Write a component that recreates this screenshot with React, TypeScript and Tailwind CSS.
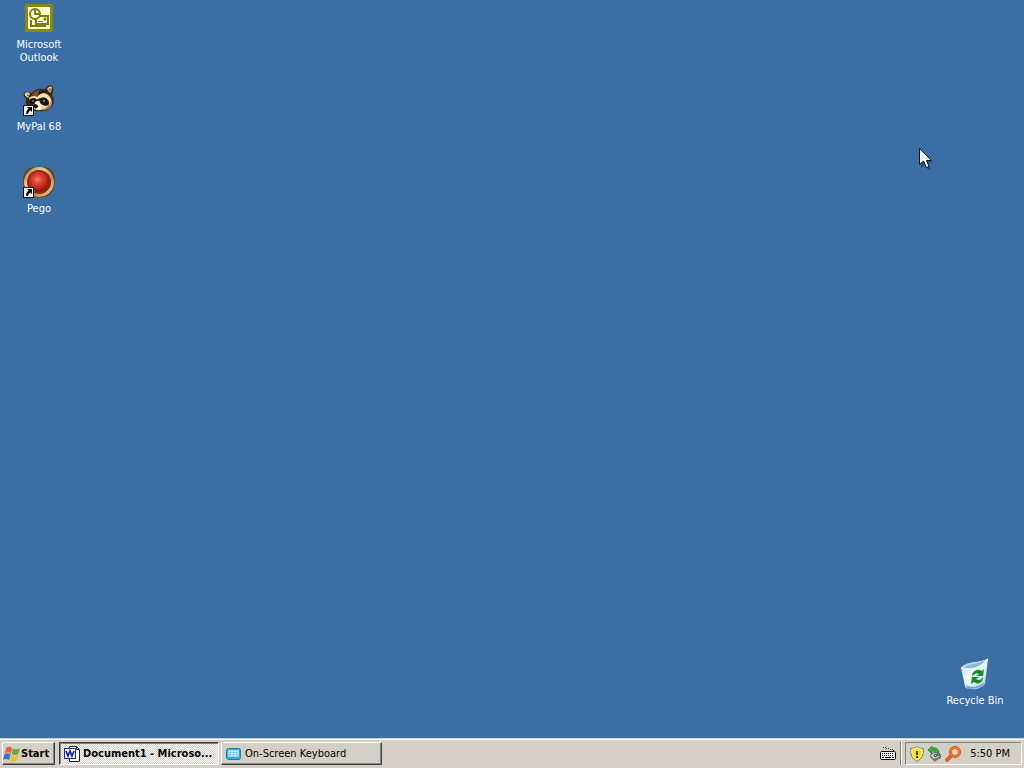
import React from "react";

function ShortcutArrow() {
  return (
    <g>
      <rect x="0.5" y="21.5" width="10" height="10" fill="#fff" stroke="#111" />
      <path d="M4 23h5v5l-1.6-1.6C6 27.3 5.3 28.5 5 30H3.2C3 27.8 3.8 26 5.6 24.6z" fill="#000" />
    </g>
  );
}

function OutlookIcon() {
  return (
    <svg width="32" height="32" viewBox="0 0 32 32" aria-hidden="true">
      <rect x="2" y="2" width="28" height="28" fill="#8b8a08" />
      <rect x="5" y="5" width="22" height="22" fill="#fffde0" />
      <rect x="7" y="7" width="18" height="18" fill="#fdfbc9" />
      <rect x="13" y="14" width="12" height="8" fill="#fffde6" stroke="#7d7c0c" strokeWidth="2" />
      <path d="M8 18v6h15" fill="none" stroke="#7d7c0c" strokeWidth="2" />
      <path d="M21 16h2v2h-2zM15 19.5h5" fill="#7d7c0c" stroke="#7d7c0c" />
      <circle cx="12" cy="12" r="5" fill="#fffde6" stroke="#7d7c0c" strokeWidth="2" />
      <path d="M12 8v4h4" fill="none" stroke="#7d7c0c" strokeWidth="2" />
    </svg>
  );
}

function RaccoonIcon() {
  return (
    <svg width="32" height="32" viewBox="0 0 32 32" aria-hidden="true">
      <path d="M1 9c2-2 5-1 7 0 4-4 9-5 14-4l3-3c2-1 4-1 5 1 1 3 0 6-1 8 3 4 2 9-1 12-3 4-8 5-12 4-4 1-8-1-9-4-4-2-5-5-4-8-2-2-3-4-2-6z" fill="#3a2817" />
      <path d="M2 9c2-1 4-1 5 1L5 14c-2-1-4-3-3-5z" fill="#e6cda4" />
      <path d="M4 10l2 1-1 2z" fill="#684326" />
      <path d="M24 5c1-2 3-3 5-2 0 3-1 5-2 6z" fill="#e1c192" />
      <path d="M26 5l2-1-1 4z" fill="#6b4728" />
      <path d="M9 10c4-4 9-5 13-4-4 1-6 4-8 7l-3 1z" fill="#735033" />
      <path d="M16 7c3-1 6-1 8 1-4-1-6 1-9 4z" fill="#1f1710" />
      <path d="M6 14c2-2 5-3 8-1 3-4 8-5 11-2 4 3 5 9 2 12-2-3-3-9-6-9-3-1-6 1-8 2-3 0-4 0-6 1z" fill="#f5dfb5" />
      <path d="M11 18c5-2 11-1 16 0-1 5-5 8-9 8-4 1-7-1-8-4z" fill="#efd09c" />
      <path d="M7 15c3-2 6-1 7 1 0 3-3 5-5 4-2 0-3-3-2-5zM17 15c3-3 8-1 9 3 1 3-3 5-6 3-3-1-4-4-3-6z" fill="#171310" />
      <circle cx="10" cy="17" r="0.8" fill="#e4d3b5" />
      <circle cx="21" cy="17" r="0.8" fill="#fff" />
      <path d="M12 18c3-2 5 1 7 5-1 3-5 4-8 2z" fill="#fff4d2" />
      <path d="M10 21c2-2 4-1 5 1 0 2-2 3-4 2-1 0-2-2-1-3z" fill="#181310" />
      <path d="M18 26c5 0 9-4 10-9 2 5-2 10-10 9z" fill="#b98245" />
      <ShortcutArrow />
    </svg>
  );
}

function PegoIcon() {
  return (
    <svg width="32" height="32" viewBox="0 0 32 32" aria-hidden="true">
      <defs>
        <radialGradient id="pegoRed" cx="46%" cy="40%" r="62%">
          <stop offset="0" stopColor="#ff8168" />
          <stop offset="0.3" stopColor="#df4936" />
          <stop offset="0.75" stopColor="#bd2118" />
          <stop offset="1" stopColor="#721108" />
        </radialGradient>
        <linearGradient id="pegoRing" x2="1" y2="1">
          <stop offset="0" stopColor="#9b6a3c" />
          <stop offset="0.3" stopColor="#ebcd93" />
          <stop offset="0.65" stopColor="#c18d54" />
          <stop offset="1" stopColor="#f0d09a" />
        </linearGradient>
      </defs>
      <path d="M5 3c2-3 20-3 22 0l3 3c3 4 2 17-1 20l-4 4c-4 2-15 2-19 0-6-4-8-18-4-24z" fill="#684020" />
      <circle cx="16" cy="16" r="13.5" fill="#8a2813" stroke="url(#pegoRing)" strokeWidth="3" />
      <circle cx="15.5" cy="15.5" r="10" fill="url(#pegoRed)" />
      <ShortcutArrow />
    </svg>
  );
}

function RecycleIcon() {
  return (
    <svg width="32" height="32" viewBox="0 0 32 32" aria-hidden="true">
      <defs>
        <linearGradient id="binGlass" x2="1" y2="1">
          <stop offset="0" stopColor="#9ccde8" />
          <stop offset="0.4" stopColor="#f1fbff" />
          <stop offset="0.7" stopColor="#d3e9f3" />
          <stop offset="1" stopColor="#86b2cb" />
        </linearGradient>
      </defs>
      <path d="M2 10c4-5 10-5 14-6 5 0 8-2 13-3l-3 25c-3 4-10 6-14 5-3 0-6-1-6-3z" fill="url(#binGlass)" />
      <path d="M2 10c4-5 10-5 14-6 5 0 8-2 13-3-4 7-12 11-18 11-4 0-7 0-9-2z" fill="#b3d9ee" />
      <path d="M5 10c5-4 10-4 14-5l7-2c-4 5-9 7-14 8z" fill="#82b8dc" />
      <path d="M2 10c10 3 20 0 27-9" fill="none" stroke="#f6ffff" strokeWidth="1.5" />
      <path d="M7 27c5 3 12 2 18-2l-1 2c-3 3-9 4-12 4s-5-1-5-4z" fill="#6faacb" />
      <path d="M13 18c0-5 6-8 10-5l2-2-1 7h-7l3-2c-3-1-4 0-7 2z" fill="#178d23" />
      <path d="M24 19c0 6-6 8-9 5l-3 2 1-7h7l-3 2c3 2 5 1 7-2z" fill="#178d23" />
    </svg>
  );
}

function StartFlag() {
  return (
    <svg width="18" height="18" viewBox="0 0 16 16" aria-hidden="true">
      <path d="M3 2.5c2-1.3 3-1.3 5 0L7 7.5c-2-1.3-3.5-1.3-5.5 0z" fill="#e8613a" />
      <path d="M8.6 3c2 1 4 1 6.4 0l-1.3 5c-2 1.2-4 1.2-6.1 0z" fill="#72a93e" />
      <path d="M1.3 8.3c2-1.2 3.5-1.2 5.5 0l-1.3 5c-2-1.1-3.5-1.1-5.5 0z" fill="#3b74d2" />
      <path d="M7.5 8.8c2 1.1 3.8 1.1 6 0l-1.3 5c-2 1.1-3.8 1.1-6 0z" fill="#eebd28" />
    </svg>
  );
}

function WordIcon() {
  return (
    <svg width="16" height="16" viewBox="0 0 16 16" aria-hidden="true">
      <path d="M5.5.5h7l3 3v12h-10z" fill="#fff" stroke="#222" />
      <path d="M12.5.5v3h3" fill="none" stroke="#222" />
      <rect x="0.5" y="2.5" width="11" height="10" fill="#f4f6ff" stroke="#1b2b91" />
      <path d="M2 5l2 5 2-5 2 5 2-5" fill="none" stroke="#15248c" strokeWidth="1.7" />
    </svg>
  );
}

function ScreenKeyboardIcon() {
  return (
    <svg width="16" height="16" viewBox="0 0 16 16" aria-hidden="true">
      <rect x="1.5" y="2.5" width="14" height="11" rx="2" fill="#39abd7" stroke="#2478a7" />
      <rect x="3" y="4" width="11" height="7" fill="#8bd5ee" />
      <path d="M4 5.5h9M4 7.5h9M5 9.5h7" stroke="#e7f9ff" />
      <path d="M5.5 5v5M8.5 5v5M11.5 5v5" stroke="#59bbdf" strokeWidth="0.6" />
    </svg>
  );
}

function KeyboardIcon() {
  return (
    <svg width="16" height="16" viewBox="0 0 16 16" aria-hidden="true">
      <path d="M3 1.5h3M6 2.5h4M10 3.5h3M13.5 4v1" fill="none" stroke="#333" strokeDasharray="1 1" />
      <rect x="0.5" y="5.5" width="15" height="8" rx="1" fill="#eee" stroke="#111" />
      <path d="M2 7.5h12M2 9.5h12" stroke="#111" strokeDasharray="1 1" />
      <path d="M2 11.5h2M5 11.5h6M12 11.5h2" stroke="#111" />
    </svg>
  );
}

function ShieldIcon() {
  return (
    <svg width="16" height="16" viewBox="0 0 16 16" aria-hidden="true">
      <path d="M8 .7c2 1.4 4 1.8 6.2 1.8.5 6-1.2 10.4-6.2 12.8C3 12.9 1.3 8.5 1.8 2.5 4 2.5 6 2.1 8 .7z" fill="#f7df24" stroke="#77796d" />
      <path d="M8 1.8c1.5.9 3.3 1.4 5.1 1.6.2 4.9-1.2 8.6-5.1 10.7-3.9-2.1-5.3-5.8-5.1-10.7C4.7 3.2 6.5 2.7 8 1.8z" fill="none" stroke="#fff6a0" />
      <path d="M8 5v4M8 10v2" stroke="#292915" strokeWidth="1.8" />
    </svg>
  );
}

function DeviceIcon() {
  return (
    <svg width="16" height="16" viewBox="0 0 16 16" aria-hidden="true">
      <path d="M3 9l7-4 4 5-7 4z" fill="#c8cccb" stroke="#666" />
      <path d="M3 9l4 4v2l-4-4zM7 13l7-3v2l-7 4z" fill="#747b79" />
      <path d="M7 9l2-1 1 2-2 1zM10 8l2-1 1 2-2 1z" fill="none" stroke="#474d4b" />
      <path d="M1 4l4-4v2c4-1 6 1 7 4l-3 1C8 5 7 5 5 5v3z" fill="#36ae3c" stroke="#227b2b" strokeWidth="0.7" />
    </svg>
  );
}

function SearchIcon() {
  return (
    <svg width="16" height="16" viewBox="0 0 16 16" aria-hidden="true">
      <path d="M7 9l-5 5" stroke="#a94310" strokeWidth="3.4" strokeLinecap="round" />
      <path d="M7 9l-5 5" stroke="#f16c18" strokeWidth="2.2" strokeLinecap="round" />
      <circle cx="10" cy="6" r="4.5" fill="#e9d5c5" stroke="#b34c10" strokeWidth="3" />
      <circle cx="10" cy="6" r="4.5" fill="none" stroke="#f47a20" strokeWidth="2" />
    </svg>
  );
}

function DesktopItem({ icon, children }: { icon: React.ReactNode; children: React.ReactNode }) {
  return (
    <button type="button" className="flex w-[78px] flex-col items-center gap-1 text-center leading-[13px] text-white">
      {icon}
      <span>{children}</span>
    </button>
  );
}

const raised =
  "border border-t-white border-l-white border-r-[#404040] border-b-[#404040] bg-[#d4d0c8] pt-px shadow-[inset_-1px_-1px_0_#808080]";

export default function App() {
  return (
    <div className="relative flex min-h-screen flex-col overflow-hidden bg-[#3b6ea5] font-['DejaVu_Sans_Condensed','DejaVu_Sans',sans-serif] text-[11px]">
      <main className="flex flex-1 justify-between">
        <div className="grid auto-rows-[82px] content-start items-start pt-[2px]">
          <DesktopItem icon={<OutlookIcon />}>Microsoft<br />Outlook</DesktopItem>
          <DesktopItem icon={<RaccoonIcon />}>MyPal 68</DesktopItem>
          <DesktopItem icon={<PegoIcon />}>Pego</DesktopItem>
        </div>
        <div className="flex items-end pr-[10px] pb-[31px]">
          <DesktopItem icon={<RecycleIcon />}>Recycle Bin</DesktopItem>
        </div>
      </main>

      <footer className="flex h-[30px] shrink-0 items-stretch border-t border-[#d4d0c8] bg-[#d4d0c8] px-[2px] pb-[3px] text-black shadow-[inset_0_1px_0_#fff]">
        <nav aria-label="Taskbar" className="flex flex-1 gap-[2px] pt-[3px]">
          <button type="button" className={`mr-[2px] flex w-[53px] items-center font-bold ${raised}`}>
            <StartFlag />
            <span>Start</span>
          </button>
          <button
            type="button"
            aria-pressed="true"
            className="flex w-40 items-center gap-[3px] border border-t-[#404040] border-r-white border-b-white border-l-[#404040] bg-[conic-gradient(#fff_25%,#d4d0c8_0_50%,#fff_0_75%,#d4d0c8_0)] bg-[length:2px_2px] pt-px pl-1 font-bold whitespace-nowrap shadow-[inset_1px_1px_0_#808080]"
          >
            <WordIcon />
            <span>Document1 - Microso...</span>
          </button>
          <button type="button" className={`flex w-[161px] items-center gap-1 pl-[3px] whitespace-nowrap ${raised}`}>
            <ScreenKeyboardIcon />
            <span>On-Screen Keyboard</span>
          </button>
        </nav>
        <div className="flex items-center gap-[3px] pt-[3px]">
          <button type="button" aria-label="Keyboard input"><KeyboardIcon /></button>
          <div className="ml-px h-full w-[2px] border-r border-l border-r-white border-l-[#808080]" />
          <div className="flex h-full items-center gap-[2px] border border-t-[#808080] border-r-white border-b-white border-l-[#808080] pt-px pr-[11px] pl-[3px]">
            <button type="button" aria-label="Security alert"><ShieldIcon /></button>
            <button type="button" aria-label="Safely remove hardware"><DeviceIcon /></button>
            <button type="button" aria-label="Search"><SearchIcon /></button>
            <time className="ml-[7px] whitespace-nowrap">5:50 PM</time>
          </div>
        </div>
      </footer>

      <svg className="pointer-events-none absolute top-[148px] left-[919px]" width="15" height="22" viewBox="0 0 15 22" aria-hidden="true">
        <path d="M2 4l12 11H9l3 6-3 1-3-5-4 3z" fill="#17375c" fillOpacity="0.5" />
        <path d="M.5.5v16l4-3.5 3 6.5 2.5-1L7.5 12.5h5z" fill="#fff" stroke="#111" />
      </svg>
    </div>
  );
}
